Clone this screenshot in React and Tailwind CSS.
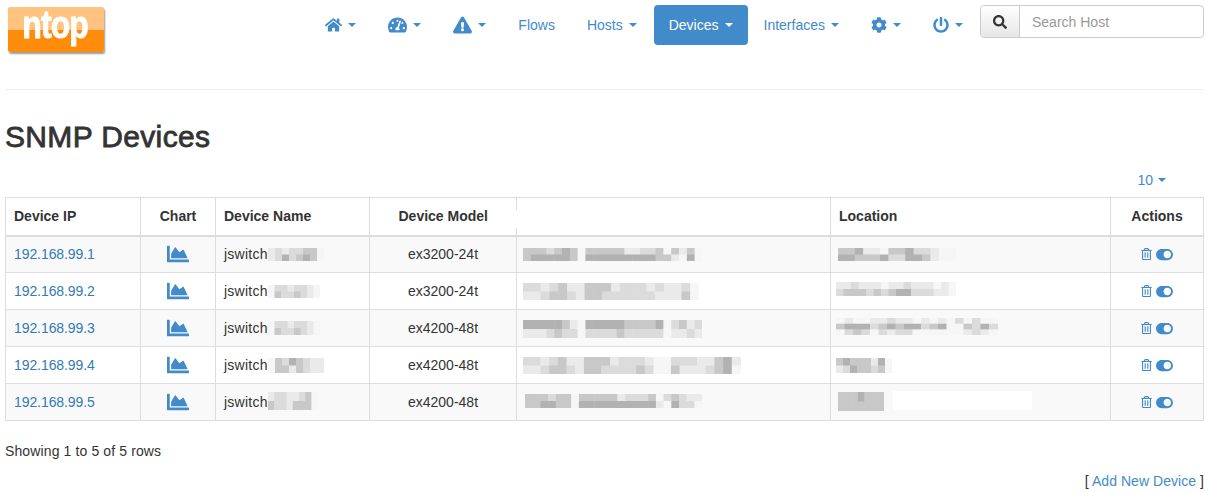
import React from "react";
import { FaHome, FaTachometerAlt, FaExclamationTriangle, FaCog, FaPowerOff, FaSearch, FaChartArea, FaRegTrashAlt, FaToggleOn } from "react-icons/fa";

const Caret = () => (
  <span className="inline-block w-0 h-0 ml-[6px] align-middle border-x-[4px] border-x-transparent border-t-[4px] border-t-current" />
);

const NavItem = ({ children, caret = true, active = false, cls = "" }) => (
  <a className={`flex items-center h-10 px-[15px] rounded text-sm ${active ? "bg-[#428bca] text-white" : "text-[#428bca]"} ${cls}`}>
    {children}
    {caret && <Caret />}
  </a>
);

/* Pixelated redaction: each row is a list of grey levels */
const Blur = ({ rows, cell, h, x, y }) => (
  <svg width={rows[0].length * cell} height={rows.length * h} className="block absolute blur-[0.6px]" style={{ left: x, top: y }}>
    {rows.map((r, i) =>
      r.map((g, j) => (
        <rect key={j} x={j * cell} y={i * h} width={cell + 0.5} height={h + 0.5} fill={`rgb(${g},${g},${g})`} />
      ))
    )}
  </svg>
);

const a = 234, b = 219, c = 200, d = 178, e = 246;

const devices = [
  {
    ip: "192.168.99.1", model: "ex3200-24t",
    name: { x: 52, y: 11, cell: 7, h: 6.5, rows: [[a, b, a, b, b, c, c, e], [a, b, d, b, c, d, c, e]] },
    desc: { x: 6, y: 11, cell: 7.8, h: 6.5, rows: [[c, c, c, b, c, d, c, e, c, c, c, c, c, a, a, b, b, c, e, c, a, c, e], [c, d, d, d, d, d, c, e, d, d, d, d, d, d, d, d, d, c, c, a, e, d, e]] },
    loc: { x: 7, y: 11, cell: 8.4, h: 6.5, rows: [[c, c, d, a, a, e, c, c, d, b, b, a, e, e], [d, d, c, c, c, d, b, b, d, d, c, a, e, e]] },
  },
  {
    ip: "192.168.99.2", model: "ex3200-24t",
    name: { x: 52, y: 12, cell: 6.5, h: 6.5, rows: [[e, b, b, a, b, b, a, e], [e, c, b, b, c, b, a, e]] },
    desc: { x: 6, y: 10, cell: 8.8, h: 8.5, rows: [[b, b, a, b, c, a, a, c, c, c, a, b, b, b, a, b, a, a, b, e], [a, a, b, c, c, b, a, c, c, b, b, b, b, b, b, a, a, a, c, e]] },
    loc: { x: 5, y: 9, cell: 7.5, h: 7, rows: [[a, a, b, a, a, a, e, a, a, b, a, a, a, e, a, e], [b, c, c, c, b, c, b, c, d, d, b, b, b, a, a, e]] },
  },
  {
    ip: "192.168.99.3", model: "ex4200-48t",
    name: { x: 52, y: 11, cell: 6.5, h: 7, rows: [[e, b, b, a, b, b, a, e], [e, c, b, b, c, b, a, e]] },
    desc: { x: 6, y: 10, cell: 7.8, h: 9, rows: [[d, d, d, d, d, c, a, e, d, d, d, d, d, c, c, c, c, d, e, b, c, a, b], [a, a, a, b, c, b, b, e, b, b, b, b, c, b, b, b, b, b, e, a, a, b, a]] },
    loc: { x: 5, y: 8, cell: 8.5, h: 5.7, rows: [[e, a, e, e, a, a, b, a, a, e, a, e, a, e, b, e, b, e, e], [c, d, d, d, b, c, d, c, d, d, b, c, d, e, e, c, b, d, b], [e, b, c, b, e, b, a, b, b, e, e, e, e, e, e, a, b, a, e]] },
  },
  {
    ip: "192.168.99.4", model: "ex4200-48t",
    name: { x: 52, y: 11, cell: 7, h: 7.5, rows: [[e, c, b, d, c, b, a, a], [e, c, c, a, c, b, a, a]] },
    desc: { x: 6, y: 10, cell: 8.7, h: 8.5, rows: [[b, b, a, b, c, a, a, c, c, c, a, b, b, b, a, e, e, b, b, b, a, a, c, d, a], [a, a, b, c, c, b, a, c, c, b, b, b, b, c, b, e, e, c, a, a, a, b, c, d, e]] },
    loc: { x: 5, y: 11, cell: 7, h: 7.5, rows: [[c, d, c, c, c, a, d, e], [a, b, d, c, c, b, c, e]] },
  },
  {
    ip: "192.168.99.5", model: "ex4200-48t",
    name: { x: 52, y: 8, cell: 6.2, h: 9, rows: [[a, b, b, a, a, b, c, e], [c, b, b, a, c, c, c, e]] },
    desc: { x: 8, y: 10, cell: 7.7, h: 7, rows: [[c, c, c, b, c, c, e, c, c, c, c, c, a, b, b, b, c, e, b, c, b, a, a], [c, c, d, d, c, c, e, d, d, d, d, d, d, d, d, d, d, a, e, d, b, b, e]] },
    loc: { x: 7, y: 8, cell: 6.6, h: 9.5, rows: [[c, c, c, d, c, c, c], [c, c, c, c, c, c, c]] },
    white: true,
  },
];

const th = "border-x border-[#ddd] border-b-2 font-bold text-sm text-[#333] p-0 pb-[1px]";
const td = "relative border border-[#ddd] h-[37px] p-0 px-[8px] text-sm text-[#333]";

export default function App() {
  return (
    <div className="w-[1209px] h-[493px] overflow-hidden bg-white text-sm text-[#333] font-['Liberation_Sans',Arial,sans-serif] px-[5px]">
      <header className="relative flex justify-end h-[90px] border-b border-[#eee]">
        <div className="absolute left-[3px] top-[7px] w-[96px] h-[45px] rounded-[2px] bg-[linear-gradient(#ffc27f_0,#ffc27f_51%,#ff8c0a_51%,#ff8c0a_100%)] shadow-[1px_2px_2px_rgba(0,0,0,0.4)] flex items-start justify-center pr-[2px]">
          <span className="inline-block text-white font-bold text-[38px] leading-none tracking-[-1px] scale-x-[0.84] [-webkit-text-stroke:1px_#fff] -mt-[1px]">ntop</span>
        </div>
        <nav className="flex items-start gap-[2px] pt-[5px]">
          <NavItem><FaHome className="w-[17px] h-[16px]" /></NavItem>
          <NavItem><FaTachometerAlt className="w-[19px] h-[18px]" /></NavItem>
          <NavItem><FaExclamationTriangle className="w-[19px] h-[18px]" /></NavItem>
          <NavItem caret={false}>Flows</NavItem>
          <NavItem>Hosts</NavItem>
          <NavItem active>Devices</NavItem>
          <NavItem cls="-ml-[1px]">Interfaces</NavItem>
          <NavItem><FaCog className="w-[16px] h-[16px]" /></NavItem>
          <NavItem><FaPowerOff className="w-[16px] h-[16px]" /></NavItem>
          <div className="flex w-[224px] h-[33px] border border-[#ccc] rounded text-sm">
            <span className="flex items-center justify-center w-[39px] shrink-0 border-r border-[#ccc] rounded-l bg-[linear-gradient(#fff,#e6e6e6)]">
              <FaSearch className="w-[14px] h-[14px] text-[#333]" />
            </span>
            <span className="flex items-center pl-[12px] text-[#999]">Search Host</span>
          </div>
        </nav>
      </header>

      <h2 className="mt-[30px] h-[34px] text-[30px] leading-[34px] font-normal text-[#333] tracking-[0.35px] [-webkit-text-stroke:0.8px_#333]">SNMP Devices</h2>

      <div className="flex justify-end items-center h-[20px] mt-[16px] pr-[38px] text-[#428bca]">
        <span className="-mr-[1px]">10</span><Caret />
      </div>

      <table className="mt-[7px] w-[1198px] table-fixed border-collapse border border-[#ddd]">
        <colgroup>
          <col className="w-[135px]" />
          <col className="w-[75px]" />
          <col className="w-[154px]" />
          <col className="w-[147px]" />
          <col className="w-[314px]" />
          <col className="w-[280px]" />
          <col className="w-[93px]" />
        </colgroup>
        <thead>
          <tr className="h-[38px]">
            <th className={`${th} text-left pl-[8px]`}>Device IP</th>
            <th className={`${th} text-center`}>Chart</th>
            <th className={`${th} text-left pl-[8px]`}>Device Name</th>
            <th className={`${th} text-center border-r-0 relative`}>
              Device Model
              <span className="absolute right-0 top-0 h-[12px] w-px bg-[#ddd]" />
              <span className="absolute right-0 bottom-0 h-[7px] w-px bg-[#ddd]" />
            </th>
            <th className={`${th} border-l-0`}></th>
            <th className={`${th} text-left pl-[8px]`}>Location</th>
            <th className={`${th} text-center`}>Actions</th>
          </tr>
        </thead>
        <tbody>
          {devices.map((row, i) => (
            <tr key={row.ip} className={i % 2 === 0 ? "bg-[#f9f9f9]" : "bg-white"}>
              <td className={td}><a className="text-[#337ab7] tracking-[-0.08px]">{row.ip}</a></td>
              <td className={td}>
                <span className="flex justify-center">
                  <FaChartArea className="w-[22px] h-[22px] text-[#428bca]" />
                </span>
              </td>
              <td className={td}>
                <span className="tracking-[0.25px]">jswitch</span>
                <Blur {...row.name} />
              </td>
              <td className={`${td} text-center`}>{row.model}</td>
              <td className={td}><Blur {...row.desc} /></td>
              <td className={td}>
                <Blur {...row.loc} />
                {row.white && <span className="absolute left-[62px] top-[7px] w-[139px] h-[19px] bg-white" />}
              </td>
              <td className={td}>
                <span className="flex items-center justify-center gap-[4px] text-[#428bca]">
                  <FaRegTrashAlt className="w-[11px] h-[12px]" />
                  <FaToggleOn className="w-[17px] h-[15px]" />
                </span>
              </td>
            </tr>
          ))}
        </tbody>
      </table>

      <p className="mt-[20px] leading-[20px] tracking-[0.12px]">Showing 1 to 5 of 5 rows</p>
      <p className="mt-[10px] leading-[20px] text-right tracking-[0.05px]">[ <a className="text-[#428bca]">Add New Device</a> ]</p>
    </div>
  );
}
